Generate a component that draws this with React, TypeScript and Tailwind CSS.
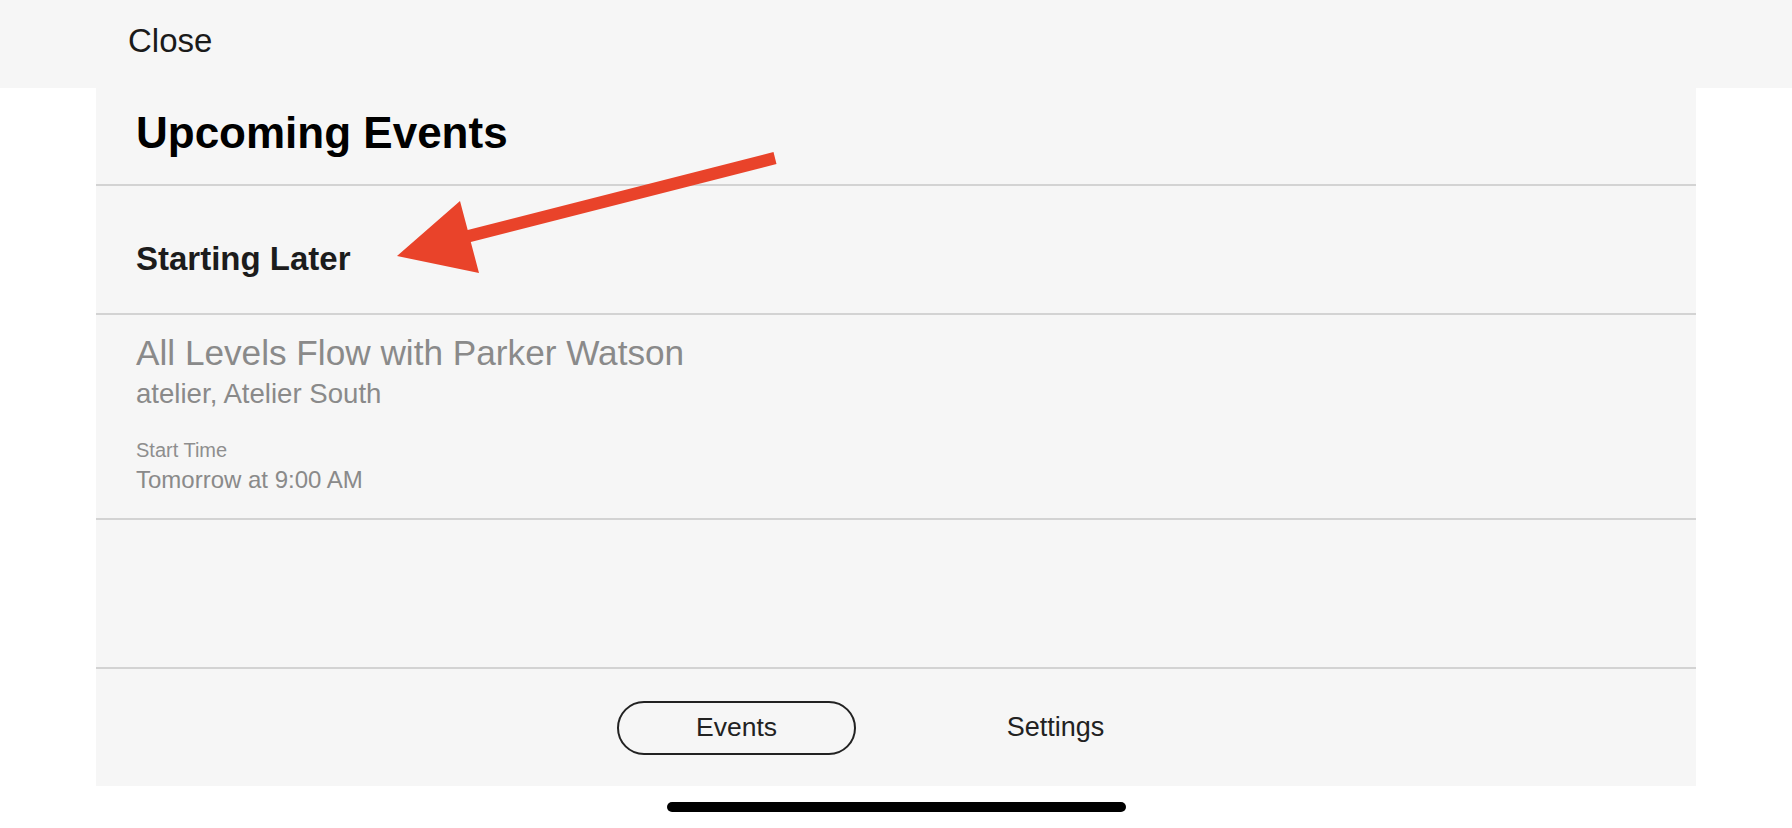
export default function App() {
  const font = { fontFamily: '"Liberation Sans", Arial, sans-serif' } as React.CSSProperties;

  return (
    <div
      className="relative w-[1792px] h-[828px] bg-white overflow-hidden flex flex-col"
      style={font}
    >
      {/* Top bar */}
      <div className="h-[88px] shrink-0 bg-[#f6f6f6] pt-[24px] pl-[128px]">
        <span className="text-[33px] leading-none text-[#1a1a1a]">Close</span>
      </div>

      {/* Sheet */}
      <div className="mx-auto w-[1600px] h-[698px] shrink-0 bg-[#f6f6f6] flex flex-col">
        <div className="h-[98px] shrink-0 border-b-2 border-[#d3d3d3] pt-[23px] pl-[40px]">
          <h1 className="text-[44px] leading-none font-bold text-black">Upcoming Events</h1>
        </div>

        <div className="h-[129px] shrink-0 border-b-2 border-[#d3d3d3] pt-[56px] pl-[40px]">
          <h2 className="text-[33px] leading-none font-bold text-[#1c1c1c]">Starting Later</h2>
        </div>

        <div className="shrink-0 border-b-2 border-[#d3d3d3] pt-[20px] pb-[26px] pl-[40px] flex flex-col">
          <div className="text-[35.2px] leading-none text-[#8a8a8a]">
            All Levels Flow with Parker Watson
          </div>
          <div className="mt-[10px] text-[27.6px] leading-none text-[#8a8a8a]">
            atelier, Atelier South
          </div>
          <div className="mt-[32px] text-[20px] leading-none text-[#8e8e8e]">Start Time</div>
          <div className="mt-[8px] text-[24px] leading-none text-[#8a8a8a]">
            Tomorrow at 9:00 AM
          </div>
        </div>

        <div className="flex-1" />

        {/* Tab bar */}
        <div className="h-[119px] shrink-0 border-t-2 border-[#d3d3d3] flex items-center justify-center gap-[80px]">
          <button className="w-[239px] h-[54px] rounded-full border-[2.5px] border-[#222] flex items-center justify-center text-[26.5px] leading-none text-[#222]">
            Events
          </button>
          <button className="w-[239px] h-[54px] flex items-center justify-center text-[27px] leading-none text-[#222]">
            Settings
          </button>
        </div>
      </div>

      {/* Home indicator */}
      <div className="pt-[16px] flex justify-center">
        <div className="w-[459px] h-[10px] rounded-full bg-black" />
      </div>

      {/* Annotation arrow */}
      <svg
        className="absolute left-0 top-0 pointer-events-none"
        width="1792"
        height="828"
        viewBox="0 0 1792 828"
      >
        <polygon
          fill="#e9432a"
          points="397,256 460,201 467.7,230 773.5,152 776.5,164 470.8,242 479,273"
        />
      </svg>
    </div>
  );
}
